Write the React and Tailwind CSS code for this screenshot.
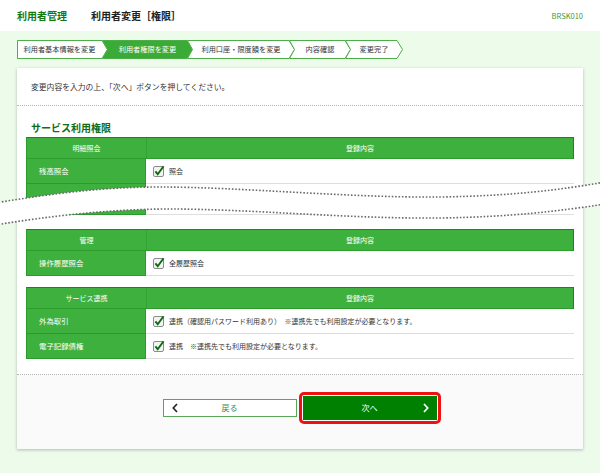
import React from "react";

const steps = [
  { label: "利用者基本情報を変更", w: 91, first: true },
  { label: "利用者権限を変更", w: 91, active: true },
  { label: "利用口座・限度額を変更", w: 108 },
  { label: "内容確認", w: 62 },
  { label: "変更完了", w: 58 },
];

const Step = ({ label, w, first, active }) => {
  const h = 19;
  const pts = first
    ? `0.5,0.5 ${w - 6},0.5 ${w - 0.5},${h / 2} ${w - 6},${h - 0.5} 0.5,${h - 0.5}`
    : `0.5,0.5 ${w - 6},0.5 ${w - 0.5},${h / 2} ${w - 6},${h - 0.5} 0.5,${h - 0.5} 5.5,${h / 2}`;
  return (
    <div
      className={
        first
          ? "relative h-[19px] flex items-center justify-center pr-[6px] shrink-0"
          : "relative h-[19px] flex items-center justify-center pl-[6px] pr-[6px] -ml-[6px] shrink-0"
      }
      style={{ width: w }}
    >
      <svg className="absolute inset-0" width={w} height={h}>
        <polygon points={pts} fill={active ? "#3aab37" : "#ffffff"} stroke="#4cae46" strokeWidth="1" />
      </svg>
      <span className={active ? "relative text-[7.2px] text-white leading-none" : "relative text-[7.2px] text-[#333] leading-none"}>
        {label}
      </span>
    </div>
  );
};

const Check = () => (
  <svg width="13" height="12" viewBox="0 0 13 12" className="shrink-0">
    <rect x="0.5" y="1.5" width="10" height="10" rx="1.5" fill="#f3f3f3" stroke="#8c8c8c" />
    <path d="M2.4 6.4 L4.7 9.2 L10.6 1.3" fill="none" stroke="#0d6b0d" strokeWidth="1.9" />
  </svg>
);

const Table = ({ head, rows, className }) => (
  <div className={"mx-[9px] " + className}>
    <div className="grid grid-cols-[120px_1fr] h-[22px] bg-[#3eb03e] border-t border-b border-r border-t-[#138a13] border-b-[#2c9d2c] border-r-[#138a13] border-l border-l-[#2c9d2c]">
      <div className="flex items-center justify-center text-[7px] text-white border-r border-[#33a333]">{head}</div>
      <div className="flex items-center justify-center text-[7px] text-white">登録内容</div>
    </div>
    {rows.map((r, idx) => (
      <div key={idx} className="grid grid-cols-[120px_1fr]" style={{ height: r.h || 25 }}>
        <div className="flex items-center pl-[12px] text-[7.4px] text-white bg-[#3eb03e] border-b border-l border-r border-[#2a9a2a]">
          {r.label}
        </div>
        <div className="flex items-center pl-[7px] gap-[3px] text-[7px] text-[#333] border-b border-[#dedede]">
          {r.value && <Check />}
          {r.value}
        </div>
      </div>
    ))}
  </div>
);

const Wave = () => (
  <svg className="absolute inset-0 pointer-events-none" width="600" height="473" viewBox="0 0 600 473">
    <path
      d="M-5,203 C50,194 100,187 160,187 C240,187 350,198 440,197 C510,196 560,190 605,182 L605,204 C560,211 510,217 440,218 C350,219 250,209 170,209 C110,209 50,216 -5,225 Z"
      fill="#ffffff"
    />
    <path
      d="M-5,203 C50,194 100,187 160,187 C240,187 350,198 440,197 C510,196 560,190 605,182"
      fill="none"
      stroke="#6a6a6a"
      strokeWidth="1.6"
      strokeDasharray="1.6 1.8"
    />
    <path
      d="M-5,225 C50,216 110,209 170,209 C250,209 350,219 440,218 C510,217 560,211 605,204"
      fill="none"
      stroke="#6a6a6a"
      strokeWidth="1.6"
      strokeDasharray="1.6 1.8"
    />
  </svg>
);

export default function App() {
  return (
    <div className="relative w-full min-h-[473px] overflow-hidden bg-[#ecfbea] font-['Noto_Sans_CJK_JP',sans-serif]">
      <header className="h-[31px] bg-white flex items-center px-[17px]">
        <span className="text-[10px] font-bold text-[#117a11]">利用者管理</span>
        <span className="ml-[24px] text-[10px] font-bold text-[#222]">利用者変更［権限］</span>
        <span className="ml-auto text-[7.5px] text-[#3a9a3a]">BRSK010</span>
      </header>

      <div className="mt-[9px] px-[17px] flex">
        {steps.map((s) => (
          <Step key={s.label} {...s} />
        ))}
      </div>

      <main className="mt-[9px] mx-[17px] bg-white shadow-[0_1px_3px_rgba(0,0,0,0.25)]">
        <div className="h-[38px] flex items-center px-[14px] text-[7.8px] text-[#333] border-b border-dotted border-[#b5b5b5]">
          変更内容を入力の上、「次へ」ボタンを押してください。
        </div>

        <div className="pt-[15px] px-[14px] h-[29px]">
          <h2 className="text-[10px] leading-[14px] font-bold text-[#136b13]">サービス利用権限</h2>
        </div>

        <div className="mt-[2px] pb-[15px] border-b border-dotted border-[#b5b5b5]">
          <Table
            head="明細照会"
            rows={[
              { label: "残高照会", value: "照会" },
              { label: "", value: "", h: 31 },
            ]}
          />
          <Table
            className="mt-[14px]"
            head="管理"
            rows={[{ label: "操作履歴照会", value: "全履歴照会" }]}
          />
          <Table
            className="mt-[11px]"
            head="サービス連携"
            rows={[
              { label: "外為取引", value: "連携（確認用パスワード利用あり）　※連携先でも利用設定が必要となります。" },
              { label: "電子記録債権", value: "連携　※連携先でも利用設定が必要となります。" },
            ]}
          />
        </div>

        <div className="h-[74px] bg-[#fafafa] pt-[17px] flex justify-center items-start">
          <div className="flex items-center gap-[2px] ml-[3px]">
            <button className="w-[134px] h-[18px] bg-white border border-[#5aa55a] flex items-center px-[8px]">
              <svg width="6" height="10" viewBox="0 0 6 10" className="shrink-0">
                <path d="M5 1 L1.3 5 L5 9" fill="none" stroke="#1f2a1f" strokeWidth="1.7" />
              </svg>
              <span className="flex-1 text-center text-[8px] text-[#3a8a3a] pr-[6px]">戻る</span>
            </button>
            <div className="border-[3px] border-[#ee1111] rounded-[5px] p-px bg-white">
              <button className="w-[134px] h-[24px] bg-[#008000] flex items-center px-[8px]">
                <span className="w-[6px]" />
                <span className="flex-1 text-center text-[8px] text-white">次へ</span>
                <svg width="6" height="10" viewBox="0 0 6 10" className="shrink-0">
                  <path d="M1 1 L4.7 5 L1 9" fill="none" stroke="#ffffff" strokeWidth="1.7" />
                </svg>
              </button>
            </div>
          </div>
        </div>
      </main>

      <Wave />
    </div>
  );
}
